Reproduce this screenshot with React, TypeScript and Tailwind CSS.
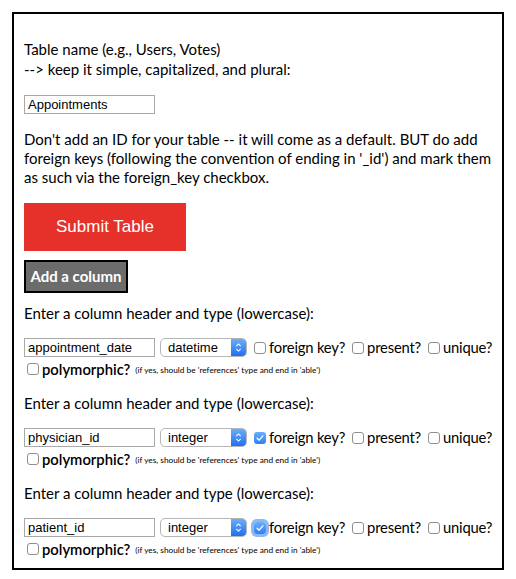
import React from "react";

type Column = {
  name: string;
  type: string;
  foreignKey: boolean;
  focused?: boolean;
};

const columns: Column[] = [
  { name: "appointment_date", type: "datetime", foreignKey: false },
  { name: "physician_id", type: "integer", foreignKey: true },
  { name: "patient_id", type: "integer", foreignKey: true, focused: true },
];

const gill = { fontFamily: "Lato, 'Open Sans', sans-serif" };
const helv = { fontFamily: "'Liberation Sans', Arial, sans-serif" };

function Box({ checked, focused }: { checked?: boolean; focused?: boolean }) {
  if (checked) {
    return (
      <span
        className={
          "inline-flex h-[12px] w-[12px] shrink-0 items-center justify-center rounded-[3px] bg-gradient-to-b from-[#6aaefb] to-[#2f7ff2] " +
          (focused ? "ring-[3px] ring-[#8db8f4]" : "")
        }
      >
        <svg viewBox="0 0 12 12" className="h-[10px] w-[10px]">
          <path d="M2.6 6.3 L5 8.6 L9.4 3.4" fill="none" stroke="white" strokeWidth="1.6" strokeLinecap="round" strokeLinejoin="round" />
        </svg>
      </span>
    );
  }
  return <span className="inline-block h-[12px] w-[12px] shrink-0 rounded-[3px] border border-[#8f8f8f] bg-white" />;
}

function Select({ value }: { value: string }) {
  return (
    <div className="flex h-[19px] w-[87px] shrink-0 overflow-hidden rounded-[5px] border border-[#b5b5b5] bg-white">
      <span className="flex-1 pl-[7px] text-[13px] leading-[17px] text-black" style={helv}>
        {value}
      </span>
      <span className="flex w-[15px] items-center justify-center bg-gradient-to-b from-[#6cacf8] to-[#1f6ff0]">
        <svg viewBox="0 0 8 12" className="h-[11px] w-[7px]">
          <path d="M1.5 4.5 L4 2 L6.5 4.5 M1.5 7.5 L4 10 L6.5 7.5" fill="none" stroke="white" strokeWidth="1.2" />
        </svg>
      </span>
    </div>
  );
}

function ColumnForm({ col }: { col: Column }) {
  return (
    <div className="mt-[10px] pb-[4px]">
      <p className="text-[15px] leading-[20px]">Enter a column header and type (lowercase):</p>
      <div className="mt-[15px] flex h-[19px] items-center whitespace-nowrap">
        <div
          className="h-[19px] w-[131px] shrink-0 border border-[#a9a9a9] pl-[3px] text-[13px] leading-[17px]"
          style={helv}
        >
          {col.name}
        </div>
        <div className="ml-[5px] shrink-0">
          <Select value={col.type} />
        </div>
        <div className="ml-[7px] flex items-center text-[14.8px] tracking-[-0.2px]">
          <Box checked={col.foreignKey} focused={col.focused} />
          <span className="ml-[3px]">foreign key?</span>
          <span className="ml-[7px]" />
          <Box />
          <span className="ml-[3px]">present?</span>
          <span className="ml-[7px]" />
          <Box />
          <span className="ml-[3px]">unique?</span>
        </div>
      </div>
      <div className="mt-[2px] flex h-[20px] items-center whitespace-nowrap pl-[3px]">
        <Box />
        <span className="ml-[3px] text-[14.8px] font-semibold leading-[20px]">polymorphic?</span>
        <span className="ml-[5px] mt-[3px] text-[8.3px]">(if yes, should be 'references' type and end in 'able')</span>
      </div>
    </div>
  );
}

export default function App() {
  return (
    <div className="h-[579px] w-[516px] bg-white p-[12px] text-black" style={gill}>
      <div className="h-[558px] w-[492px] border-2 border-black px-[10px] pt-[25px]">
        <p className="text-[15px] leading-[20px]">
          Table name (e.g., Users, Votes)
          <br />
          --&gt; keep it simple, capitalized, and plural:
        </p>
        <div
          className="mt-[16px] h-[19px] w-[131px] border border-[#a9a9a9] pl-[3px] text-[13px] leading-[17px]"
          style={helv}
        >
          Appointments
        </div>
        <p className="mt-[16px] text-[15px] leading-[19px]">
          Don't add an ID for your table -- it will come as a default. BUT do add foreign keys (following the convention of ending in '_id') and mark them as such via the foreign_key checkbox.
        </p>
        <button
          className="mt-[16px] flex h-[48px] w-[162px] items-center justify-center bg-[#e5312a] text-[17px] text-white"
          style={helv}
        >
          Submit Table
        </button>
        <button className="mt-[9px] flex h-[33px] w-[104px] items-center justify-center border-2 border-black bg-[#6c6c6c] text-[15px] font-bold text-white">
          Add a column
        </button>
        {columns.map((c) => (
          <ColumnForm key={c.name} col={c} />
        ))}
      </div>
    </div>
  );
}
